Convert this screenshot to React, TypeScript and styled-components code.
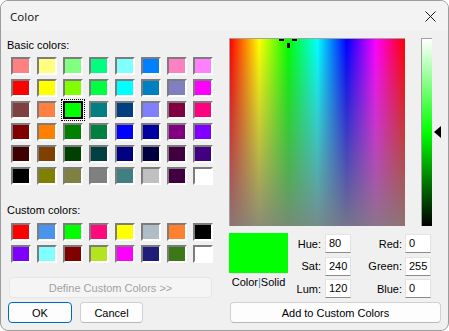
import React from 'react';
import styled, { createGlobalStyle } from 'styled-components';

const GlobalStyle = createGlobalStyle`
  html, body {
    margin: 0;
    padding: 0;
    background: #ffffff;
  }
  * {
    box-sizing: border-box;
  }
`;

const basicColors = [
  '#FF8080', '#FFFF80', '#80FF80', '#00FF80', '#80FFFF', '#0080FF', '#FF80C0', '#FF80FF',
  '#FF0000', '#FFFF00', '#80FF00', '#00FF40', '#00FFFF', '#0080C0', '#8080C0', '#FF00FF',
  '#804040', '#FF8040', '#00FF00', '#008080', '#004080', '#8080FF', '#800040', '#FF0080',
  '#800000', '#FF8000', '#008000', '#008040', '#0000FF', '#0000A0', '#800080', '#8000FF',
  '#400000', '#804000', '#004000', '#004040', '#000080', '#000040', '#400040', '#400080',
  '#000000', '#808000', '#808040', '#808080', '#408080', '#C0C0C0', '#400040', '#FFFFFF',
];

const customColors = [
  '#FF0000', '#4A94EE', '#00FF00', '#FF0A7C', '#FFFF00', '#B0BCC6', '#FF8030', '#000000',
  '#8000FF', '#80FFFF', '#800000', '#B4E41E', '#FF00FF', '#1E1E7A', '#3C7818', '#FFFFFF',
];

const Window = styled.div`
  width: 449px;
  height: 331px;
  border: 1px solid #9c9c9c;
  border-radius: 8px;
  overflow: hidden;
  background: #f0f0f0;
  display: flex;
  flex-direction: column;
  font-family: "Liberation Sans", Arial, sans-serif;
  font-size: 11px;
  color: #000;
`;

const TitleBar = styled.div`
  height: 30px;
  flex-shrink: 0;
  background: #f3f3f3;
  display: flex;
  align-items: center;
  justify-content: space-between;
  padding: 0 9px 0 9px;
`;

const Title = styled.span`
  font-family: "Noto Sans", "Open Sans", sans-serif;
  font-size: 11.5px;
  color: #1a1a1a;
`;

const CloseButton = styled.div`
  width: 14px;
  height: 14px;
  display: flex;
  align-items: center;
  justify-content: center;
  margin-right: 2px;
`;

const Body = styled.div`
  display: flex;
  flex: 1;
`;

const LeftPane = styled.div`
  width: 219px;
  padding: 8px 0 0 6px;
  display: flex;
  flex-direction: column;
`;

const SectionLabel = styled.div<{ $gap: number }>`
  height: 13px;
  line-height: 13px;
  margin-top: ${p => p.$gap}px;
  color: #000;
`;

const SwatchGrid = styled.div<{ $gap: number }>`
  display: grid;
  grid-template-columns: repeat(8, 20px);
  grid-auto-rows: 18px;
  column-gap: 6px;
  row-gap: 4px;
  margin: ${p => p.$gap}px 0 0 4px;
`;

const Swatch = styled.div<{ $color: string; $selected?: boolean }>`
  background: ${p => p.$color};
  border: 2px solid;
  border-color: ${p => (p.$selected ? '#000' : '#7c7c7c #ffffff #ffffff #7c7c7c')};
  outline: ${p => (p.$selected ? '1px dotted #000' : 'none')};
  outline-offset: 1px;
`;

const Button = styled.div<{ $primary?: boolean; $disabled?: boolean; $width: number }>`
  width: ${p => p.$width}px;
  height: 21px;
  display: flex;
  align-items: center;
  justify-content: center;
  border-radius: 4px;
  background: ${p => (p.$disabled ? '#f5f5f5' : '#fdfdfd')};
  border: 1px solid ${p => (p.$primary ? '#0067c0' : p.$disabled ? '#e6e6e6' : '#d0d0d0')};
  border-bottom-color: ${p => (p.$primary ? '#0067c0' : p.$disabled ? '#e6e6e6' : '#b8b8b8')};
  color: ${p => (p.$disabled ? '#a2a2a2' : '#000')};
  font-size: 11px;
`;

const DefineRow = styled.div`
  margin: 14px 0 0 2px;
`;

const ActionRow = styled.div`
  display: flex;
  gap: 8px;
  margin: 4px 0 0 1px;
`;

const RightPane = styled.div`
  flex: 1;
  padding: 7px 7px 0 9px;
  display: flex;
  flex-direction: column;
`;

const PickerRow = styled.div`
  display: flex;
  align-items: flex-start;
`;

const Spectrum = styled.div`
  position: relative;
  width: 176px;
  height: 188px;
  border-top: 1px solid #a0a0a0;
  border-left: 1px solid #a0a0a0;
  background:
    linear-gradient(to bottom, rgba(128, 128, 128, 0) 0%, rgba(128, 128, 128, 0.9) 100%),
    linear-gradient(to right, #ff0000 0%, #ffff00 16.67%, #00ff00 33.33%, #00ffff 50%, #0000ff 66.67%, #ff00ff 83.33%, #ff0000 100%);
`;

const CrossBar = styled.div<{ $x: number; $y: number; $w: number; $h: number }>`
  position: absolute;
  left: ${p => p.$x}px;
  top: ${p => p.$y}px;
  width: ${p => p.$w}px;
  height: ${p => p.$h}px;
  background: #000;
`;

const LumWrap = styled.div`
  position: relative;
  margin-left: 16px;
`;

const LumBar = styled.div`
  width: 11px;
  height: 188px;
  border-top: 1px solid #a0a0a0;
  border-left: 1px solid #a0a0a0;
  background: linear-gradient(to bottom, #ffffff 0%, #00ff00 50%, #000000 100%);
`;

const LumArrow = styled.div`
  position: absolute;
  left: 13px;
  top: 88px;
  width: 0;
  height: 0;
  border-top: 6.5px solid transparent;
  border-bottom: 6.5px solid transparent;
  border-right: 7px solid #000;
`;

const ValueSection = styled.div`
  display: flex;
  margin-top: 7px;
`;

const PreviewColumn = styled.div`
  width: 59px;
  display: flex;
  flex-direction: column;
  align-items: center;
`;

const Preview = styled.div`
  width: 59px;
  height: 40px;
  background: #00ff00;
`;

const PreviewLabel = styled.div`
  margin-top: 3px;
  height: 13px;
  line-height: 13px;
  font-size: 11px;
  white-space: nowrap;
`;

const Caret = styled.span`
  color: #3f86c8;
`;

const FieldGrid = styled.div`
  display: grid;
  grid-template-columns: 33px 30px 51px 29px;
  grid-auto-rows: 19px;
  row-gap: 3.5px;
  margin-top: 1px;
`;

const FieldLabel = styled.div`
  justify-self: end;
  align-self: center;
  font-size: 11px;
`;

const FieldInput = styled.div`
  justify-self: end;
  width: 26px;
  height: 19px;
  background: #fff;
  border: 1px solid #e3e3e3;
  border-bottom-color: #8a8a8a;
  padding: 0 0 0 3px;
  line-height: 17px;
  font-size: 11px;
`;

const AddRow = styled.div`
  margin: 4px 0 0 1px;
`;

const fields = [
  ['Hue:', '80', 'Red:', '0'],
  ['Sat:', '240', 'Green:', '255'],
  ['Lum:', '120', 'Blue:', '0'],
];

export default function App() {
  return (
    <>
      <GlobalStyle />
      <Window>
        <TitleBar>
          <Title>Color</Title>
          <CloseButton>
            <svg width="11" height="11" viewBox="0 0 11 11">
              <path d="M0.5 0.5 L10.5 10.5 M10.5 0.5 L0.5 10.5" stroke="#1a1a1a" strokeWidth="1" fill="none" />
            </svg>
          </CloseButton>
        </TitleBar>
        <Body>
          <LeftPane>
            <SectionLabel $gap={0}>Basic colors:</SectionLabel>
            <SwatchGrid $gap={5}>
              {basicColors.map((c, i) => (
                <Swatch key={i} $color={c} $selected={i === 18} />
              ))}
            </SwatchGrid>
            <SectionLabel $gap={19}>Custom colors:</SectionLabel>
            <SwatchGrid $gap={6}>
              {customColors.map((c, i) => (
                <Swatch key={i} $color={c} />
              ))}
            </SwatchGrid>
            <DefineRow>
              <Button $disabled $width={203}>Define Custom Colors &gt;&gt;</Button>
            </DefineRow>
            <ActionRow>
              <Button $primary $width={64}>OK</Button>
              <Button $width={63}>Cancel</Button>
            </ActionRow>
          </LeftPane>
          <RightPane>
            <PickerRow>
              <Spectrum>
                <CrossBar $x={49} $y={0} $w={5} $h={2} />
                <CrossBar $x={62} $y={0} $w={5} $h={2} />
                <CrossBar $x={57} $y={4} $w={3} $h={5} />
              </Spectrum>
              <LumWrap>
                <LumBar />
                <LumArrow />
              </LumWrap>
            </PickerRow>
            <ValueSection>
              <PreviewColumn>
                <Preview />
                <PreviewLabel>
                  Color<Caret>|</Caret>Solid
                </PreviewLabel>
              </PreviewColumn>
              <FieldGrid>
                {fields.map(([l1, v1, l2, v2]) => (
                  <React.Fragment key={l1}>
                    <FieldLabel>{l1}</FieldLabel>
                    <FieldInput>{v1}</FieldInput>
                    <FieldLabel>{l2}</FieldLabel>
                    <FieldInput>{v2}</FieldInput>
                  </React.Fragment>
                ))}
              </FieldGrid>
            </ValueSection>
            <AddRow>
              <Button $width={211}>Add to Custom Colors</Button>
            </AddRow>
          </RightPane>
        </Body>
      </Window>
    </>
  );
}
